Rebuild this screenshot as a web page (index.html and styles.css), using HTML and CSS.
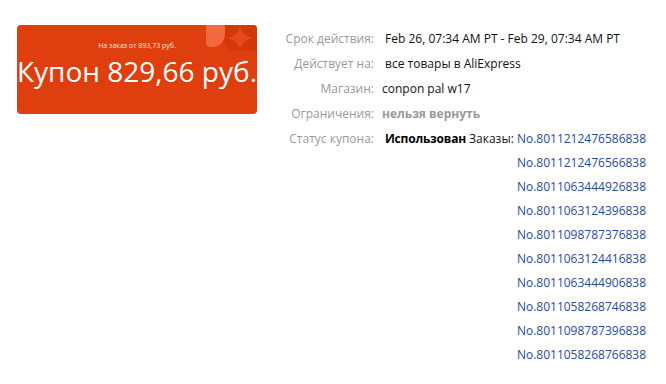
FILE: index.html
```html
<!DOCTYPE html>
<html lang="ru">
<head>
    <meta charset="UTF-8">
    <meta name="viewport" content="width=device-width, initial-scale=1.0">
    <title>Купон</title>
    <link rel="stylesheet" href="styles.css">
</head>
<body>
    <div class="coupon-card">
        <svg class="coupon-deco" width="51" height="26" viewBox="0 0 51 26">
            <path d="M18 0 H51 V26 H30 A12 12 0 0 1 18 14 Z" fill="#d4380a"/>
            <path d="M0 0 H19 V9 A13 13 0 0 1 6 22 H4 A4 4 0 0 1 0 18 Z" fill="#f26840"/>
            <path d="M34 2 Q36 11 47 13 Q36 15 34 25 Q32 15 21 13 Q32 11 34 2 Z" fill="#e64a18"/>
        </svg>
        <div class="coupon-min">На заказ от 893,73 руб.</div>
        <div class="coupon-value">Купон 829,66 руб.</div>
    </div>

    <div class="coupon-info">
        <div class="info-row">
            <span class="info-label">Срок действия:</span>
            <span class="info-value">&nbsp;Feb 26, 07:34 AM PT - Feb 29, 07:34 AM PT</span>
        </div>
        <div class="info-row">
            <span class="info-label">Действует на:</span>
            <span class="info-value">&nbsp;все товары в AliExpress</span>
        </div>
        <div class="info-row">
            <span class="info-label">Магазин:</span>
            <span class="info-value">conpon pal w17</span>
        </div>
        <div class="info-row">
            <span class="info-label">Ограничения:</span>
            <span class="info-value muted">нельзя вернуть</span>
        </div>
        <div class="info-row">
            <span class="info-label">Статус купона:</span>
            <div class="info-value status">
                <span class="status-used">&nbsp;Использован</span>
                <span class="status-orders">&nbsp;Заказы:&nbsp;</span>
                <div class="order-list">
                    <a href="#">No.8011212476586838</a>
                    <a href="#">No.8011212476566838</a>
                    <a href="#">No.8011063444926838</a>
                    <a href="#">No.8011063124396838</a>
                    <a href="#">No.8011098787376838</a>
                    <a href="#">No.8011063124416838</a>
                    <a href="#">No.8011063444906838</a>
                    <a href="#">No.8011058268746838</a>
                    <a href="#">No.8011098787396838</a>
                    <a href="#">No.8011058268766838</a>
                </div>
            </div>
        </div>
    </div>
</body>
</html>
```

FILE: styles.css
```css
*{
    margin: 0;
    padding: 0;
    box-sizing: border-box;
}
body {
    font-family: 'Open Sans', 'Noto Sans', Arial, sans-serif;
    font-size: 12px;
    color: #222;
    background-color: #fff;
    width: 666px;
    height: 384px;
    overflow: hidden;
    display: flex;
    align-items: flex-start;
    padding: 25px 0 0 17px;
}
.coupon-card {
    position: relative;
    width: 240px;
    height: 89px;
    border-radius: 4px;
    background-color: #df3f0e;
    color: #fff;
    text-align: center;
    overflow: hidden;
}
.coupon-deco {
    position: absolute;
    top: 0;
    left: 189px;
}
.coupon-min {
    position: relative;
    font-size: 7px;
    margin-top: 16px;
    line-height: 10px;
    color: #fbe3d8;
}
.coupon-value {
    position: relative;
    font-size: 28px;
    line-height: 34px;
    margin-top: 3px;
    white-space: nowrap;
}
.coupon-info {
    margin-left: 25px;
    margin-top: 1px;
}
.info-row {
    display: flex;
    line-height: 25px;
}
.info-label {
    width: 100px;
    text-align: right;
    padding-right: 8px;
    color: #999;
    flex-shrink: 0;
}
.info-value {
    color: #111;
    white-space: nowrap;
}
.muted {
    color: #999;
    font-weight: 700;
}
.status {
    display: flex;
    align-items: flex-start;
}
.status-used {
    font-weight: 700;
    color: #000;
    letter-spacing: -0.2px;
}
.order-list {
    display: flex;
    flex-direction: column;
    line-height: 24px;
}
.order-list a {
    color: #1f4c9c;
    text-decoration: none;
}
.order-list a:first-child {
    line-height: 25px;
}
```
